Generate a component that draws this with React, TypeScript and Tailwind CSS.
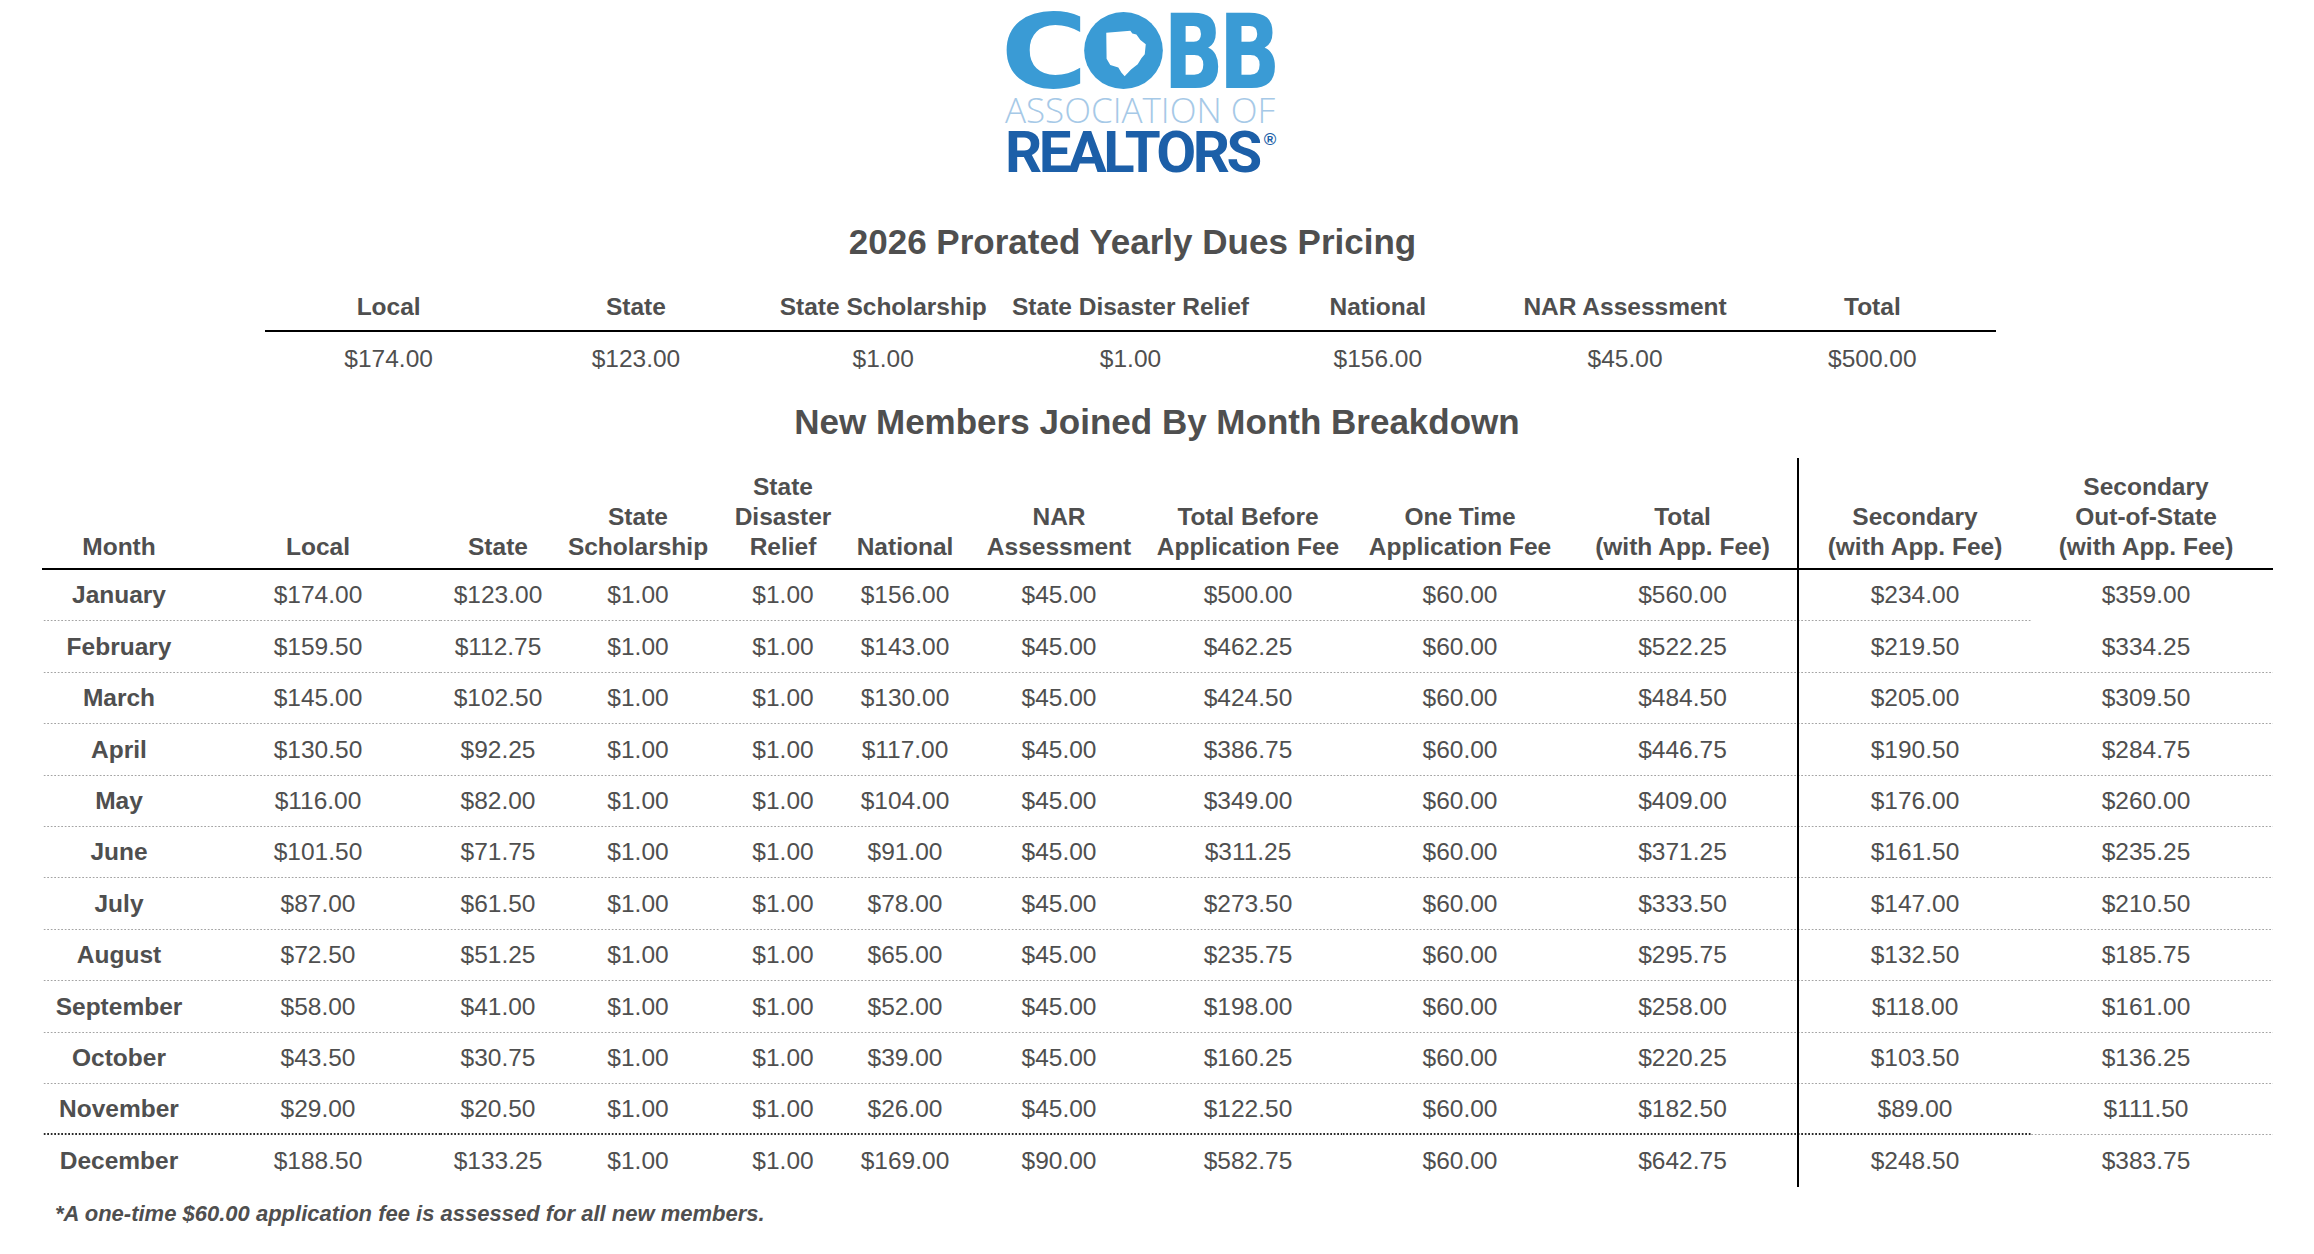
import React from "react";

const TEXT = "text-[#4f4f4f]";
const LIGHT =
  "bg-[linear-gradient(to_right,#a4a4a4_1.5px,transparent_1.5px)] bg-[length:3.5px_1px] bg-repeat-x bg-bottom";
const DARK =
  "bg-[linear-gradient(to_right,#2a2a2a_2px,transparent_2px)] bg-[length:3.5px_2px] bg-repeat-x bg-bottom";

const topHeaders = ["Local", "State", "State Scholarship", "State Disaster Relief", "National", "NAR Assessment", "Total"];
const topValues = ["$174.00", "$123.00", "$1.00", "$1.00", "$156.00", "$45.00", "$500.00"];

const headers: string[][] = [
  ["Month"],
  ["Local"],
  ["State"],
  ["State", "Scholarship"],
  ["State", "Disaster", "Relief"],
  ["National"],
  ["NAR", "Assessment"],
  ["Total Before", "Application Fee"],
  ["One Time", "Application Fee"],
  ["Total", "(with App. Fee)"],
  ["Secondary", "(with App. Fee)"],
  ["Secondary", "Out-of-State", "(with App. Fee)"],
];

const rows: { h: string; cells: string[] }[] = [
  { h: "h-[51px]", cells: ["January", "$174.00", "$123.00", "$1.00", "$1.00", "$156.00", "$45.00", "$500.00", "$60.00", "$560.00", "$234.00", "$359.00"] },
  { h: "h-[52px]", cells: ["February", "$159.50", "$112.75", "$1.00", "$1.00", "$143.00", "$45.00", "$462.25", "$60.00", "$522.25", "$219.50", "$334.25"] },
  { h: "h-[51px]", cells: ["March", "$145.00", "$102.50", "$1.00", "$1.00", "$130.00", "$45.00", "$424.50", "$60.00", "$484.50", "$205.00", "$309.50"] },
  { h: "h-[52px]", cells: ["April", "$130.50", "$92.25", "$1.00", "$1.00", "$117.00", "$45.00", "$386.75", "$60.00", "$446.75", "$190.50", "$284.75"] },
  { h: "h-[51px]", cells: ["May", "$116.00", "$82.00", "$1.00", "$1.00", "$104.00", "$45.00", "$349.00", "$60.00", "$409.00", "$176.00", "$260.00"] },
  { h: "h-[51px]", cells: ["June", "$101.50", "$71.75", "$1.00", "$1.00", "$91.00", "$45.00", "$311.25", "$60.00", "$371.25", "$161.50", "$235.25"] },
  { h: "h-[52px]", cells: ["July", "$87.00", "$61.50", "$1.00", "$1.00", "$78.00", "$45.00", "$273.50", "$60.00", "$333.50", "$147.00", "$210.50"] },
  { h: "h-[51px]", cells: ["August", "$72.50", "$51.25", "$1.00", "$1.00", "$65.00", "$45.00", "$235.75", "$60.00", "$295.75", "$132.50", "$185.75"] },
  { h: "h-[52px]", cells: ["September", "$58.00", "$41.00", "$1.00", "$1.00", "$52.00", "$45.00", "$198.00", "$60.00", "$258.00", "$118.00", "$161.00"] },
  { h: "h-[51px]", cells: ["October", "$43.50", "$30.75", "$1.00", "$1.00", "$39.00", "$45.00", "$160.25", "$60.00", "$220.25", "$103.50", "$136.25"] },
  { h: "h-[51px]", cells: ["November", "$29.00", "$20.50", "$1.00", "$1.00", "$26.00", "$45.00", "$122.50", "$60.00", "$182.50", "$89.00", "$111.50"] },
  { h: "h-[52px]", cells: ["December", "$188.50", "$133.25", "$1.00", "$1.00", "$169.00", "$90.00", "$582.75", "$60.00", "$642.75", "$248.50", "$383.75"] },
];

const GRID =
  "grid grid-cols-[154px_244px_116px_164px_126px_118px_190px_188px_236px_219px_234px_242px]";

function colExtra(ci: number): string {
  if (ci === 9) return "pr-[10px]";
  if (ci === 10) return "border-l-2 border-l-black";
  if (ci === 11) return "pr-[12px]";
  return "";
}

function lineFor(rowIdx: number, colIdx: number): string {
  if (rowIdx === 11) return "";
  if (rowIdx === 0 && colIdx === 11) return "";
  if (rowIdx === 10 && colIdx < 11) return DARK;
  return LIGHT;
}

function Logo() {
  return (
    <div className="ml-[1005px] w-[290px] pt-[12px]">
      <div className="flex h-[76px] items-center text-[#3a9bd5]">
        <span className="flex w-[78px] justify-center">
          <span className="inline-block translate-y-[2px] scale-x-[1.14] font-['DejaVu_Sans',sans-serif] text-[104px] font-bold leading-[0.75]">
            C
          </span>
        </span>
        <svg width="79" height="77" viewBox="0 0 235 230" className="ml-[1px]">
          <ellipse cx="117.5" cy="115" rx="117.5" ry="115" fill="#3a9bd5" />
          <path
            d="M66 62 L138 56 L144 64 L156 67 L168 84 L184 96 L181 126 L171 138 L160 156 L140 172 L121 192 L111 181 L102 166 L78 158 L67 140 Z"
            fill="#ffffff"
          />
        </svg>
        <span className="ml-[6px] flex w-[50px] justify-center">
          <span className="inline-block translate-y-[2px] scale-x-[0.76] font-['DejaVu_Sans',sans-serif] text-[104px] font-bold leading-[0.75]">
            B
          </span>
        </span>
        <span className="ml-[4px] flex w-[53px] justify-center">
          <span className="inline-block translate-y-[2px] scale-x-[0.78] font-['DejaVu_Sans',sans-serif] text-[104px] font-bold leading-[0.75]">
            B
          </span>
        </span>
      </div>
      <div className="flex h-[43px] items-center">
        <span className="font-['Open_Sans',sans-serif] text-[35px] font-light leading-none text-[#a6c9e7]">
          ASSOCIATION OF
        </span>
      </div>
      <div className="flex h-[43px] items-center">
        <span className="font-['Roboto',sans-serif] text-[58px] font-bold leading-[0.8] tracking-[-3.5px] text-[#1c5fa8]">
          REALTORS
        </span>
        <span className="ml-[5px] self-start font-['Liberation_Sans',sans-serif] text-[17px] font-bold leading-none text-[#1c5fa8]">
          ®
        </span>
      </div>
    </div>
  );
}

export default function App() {
  return (
    <div className={`min-h-screen w-full bg-white font-['Liberation_Sans',Arial,sans-serif] ${TEXT}`}>
      <div className="h-[212px]">
        <Logo />
      </div>

      <div className="ml-[265px] w-[1731px]">
        <div className="flex h-[60px] items-center justify-center pl-[4px] text-[35px] font-bold">
          2026 Prorated Yearly Dues Pricing
        </div>
        <div className="mt-[12px] grid h-[48px] grid-cols-7 border-b-2 border-black">
          {topHeaders.map((h) => (
            <div key={h} className="flex items-center justify-center text-[24.5px] font-bold">
              {h}
            </div>
          ))}
        </div>
        <div className="grid h-[54px] grid-cols-7">
          {topValues.map((v, i) => (
            <div key={i} className="flex items-center justify-center text-[24.5px]">
              {v}
            </div>
          ))}
        </div>
      </div>

      <div className="mt-[6px] flex h-[60px] items-center justify-center text-[35px] font-bold">
        New Members Joined By Month Breakdown
      </div>

      <div className="ml-[42px] mt-[6px] w-[2231px]">
        <div className={GRID}>
          {headers.map((lines, i) => (
            <div
              key={i}
              className={`flex h-[112px] flex-col items-center justify-end border-b-2 border-b-black pb-[6px] text-[24.5px] font-bold leading-[30px] ${colExtra(
                i
              )}`}
            >
              {lines.map((l) => (
                <div key={l} className="whitespace-nowrap text-center">
                  {l}
                </div>
              ))}
            </div>
          ))}
        </div>
        {rows.map((r, ri) => (
          <div key={ri} className={GRID}>
            {r.cells.map((c, ci) => (
              <div
                key={ci}
                className={`flex ${r.h} items-center justify-center text-[24.5px] ${ci === 0 ? "font-bold" : ""} ${colExtra(
                  ci
                )} ${lineFor(ri, ci)}`}
              >
                {c}
              </div>
            ))}
          </div>
        ))}
      </div>

      <div className="flex h-[52px] items-center pl-[55px] text-[22px] font-bold italic">
        *A one-time $60.00 application fee is assessed for all new members.
      </div>
    </div>
  );
}
